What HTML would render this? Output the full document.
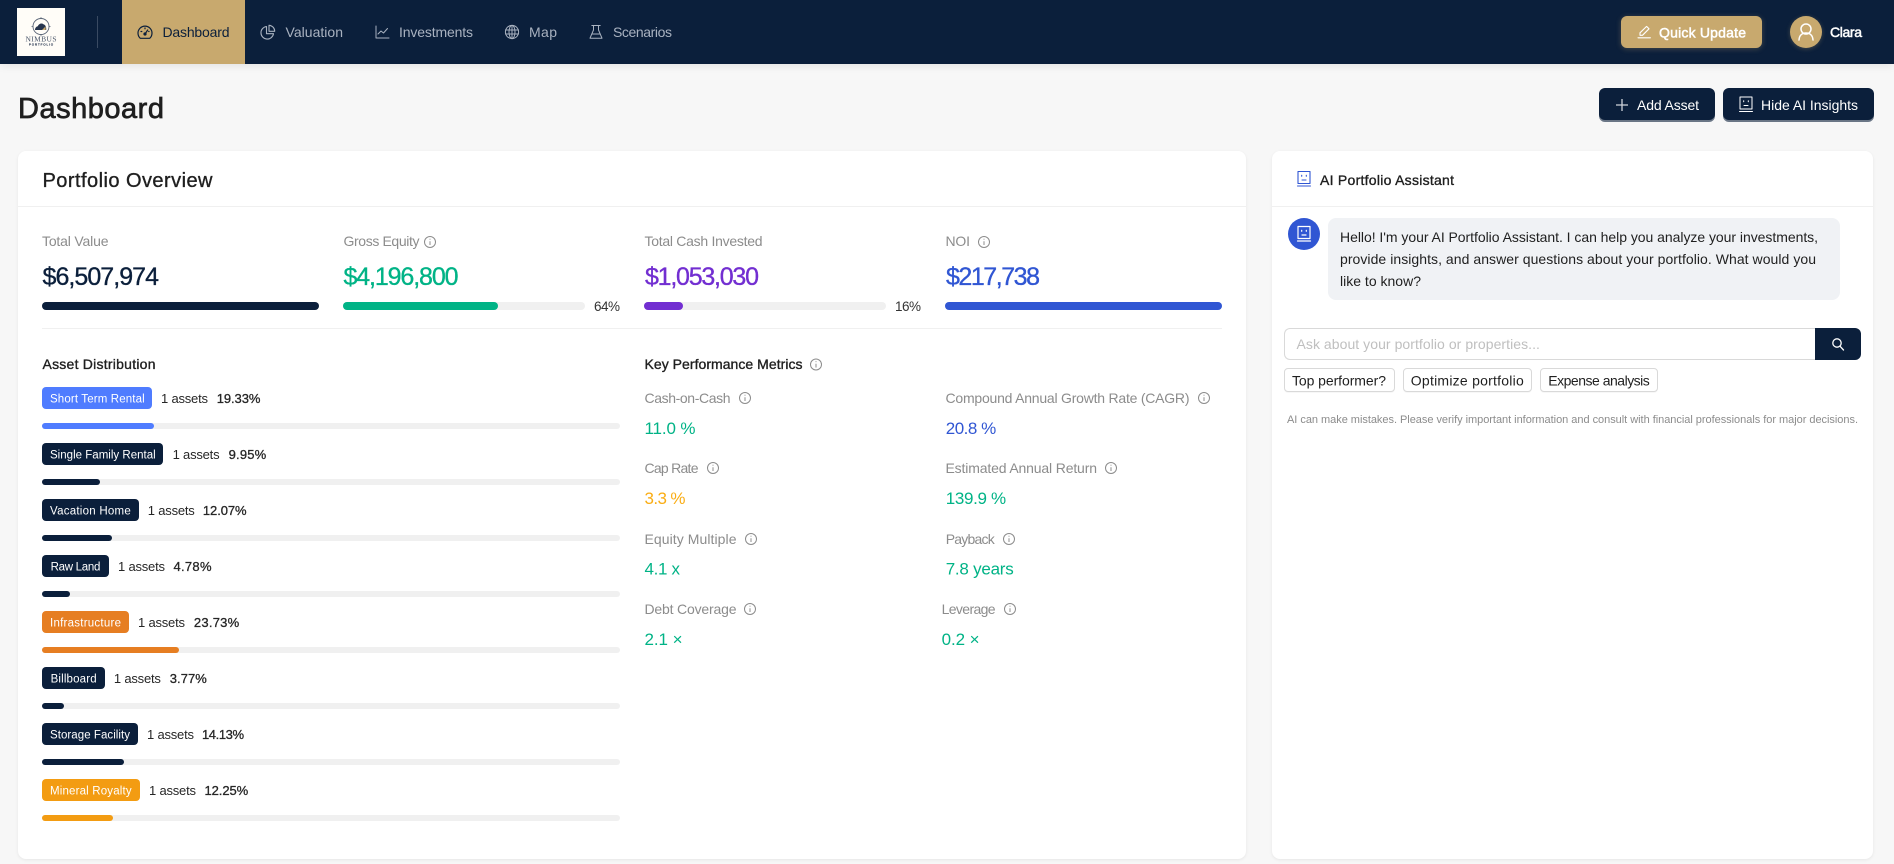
<!DOCTYPE html>
<html lang="en">
<head>
<meta charset="utf-8">
<title>Dashboard</title>
<style>
html,body{margin:0;padding:0;background:#f7f7f7;width:1894px;height:864px;overflow:hidden}
.b{position:absolute}
.card{background:#fff;border-radius:8px;box-shadow:0 1px 3px rgba(0,0,0,.07)}
.track{background:#f0f0f0;border-radius:4px}
.fill{position:absolute;left:0;top:0;bottom:0;border-radius:4px}
.badge{border-radius:4px;height:22px;left:42px}
svg.o{position:absolute;left:0;top:0}
text{font-family:"Liberation Sans",Arial,sans-serif;font-size:14px;fill:currentColor;color:#1f1f1f;white-space:pre}
.m{stroke:currentColor;stroke-width:.35px}
.g{color:#8c8c8c}
.nv{color:#a9b2c0}
.w{color:#fff}
.bd{font-size:11.5px;color:#fff}
.as{font-size:13px;color:#262626}
.pc{font-size:13px;color:#262626;stroke:currentColor;stroke-width:.3px}
.val{font-size:25px}
.kv{font-size:17px}
.gr{color:#00b386}
.bl{color:#3056d3}
.pu{color:#722ed1}
.or{color:#faad14}
.i circle,.i path{fill:none;stroke:#8c8c8c;stroke-width:1}
.ic{fill:none;stroke-linecap:round;stroke-linejoin:round}
</style>
</head>
<body>
<div class="b" style="left:0;top:0;width:1894px;height:64px;background:#0b1f3b;box-shadow:0 2px 8px rgba(0,0,0,.08)"></div>
<div class="b" style="left:17px;top:8px;width:48px;height:48px;background:#fffdf8"></div>
<div class="b" style="left:97px;top:16px;width:1px;height:32px;background:#3a4a62"></div>
<div class="b" style="left:122px;top:0;width:123px;height:64px;background:#c8a96e"></div>
<div class="b" style="left:1621px;top:16px;width:141px;height:32px;background:#c8a96e;border-radius:6px;box-shadow:0 1px 6px rgba(200,169,110,.3)"></div>
<div class="b" style="left:1790px;top:16px;width:32px;height:32px;background:#c8a96e;border-radius:50%;box-shadow:0 1px 5px rgba(200,169,110,.3)"></div>

<div class="b" style="left:1599px;top:88px;width:116px;height:32px;background:#0b1f3b;border-radius:6px;box-shadow:0 2px 0 rgba(11,31,59,.6)"></div>
<div class="b" style="left:1723px;top:88px;width:151px;height:32px;background:#0b1f3b;border-radius:6px;box-shadow:0 2px 0 rgba(11,31,59,.6)"></div>

<div class="b card" style="left:18px;top:151px;width:1228px;height:708px"></div>
<div class="b card" style="left:1272px;top:151px;width:601px;height:708px"></div>
<div class="b" style="left:18px;top:206px;width:1228px;height:1px;background:#f0f0f0"></div>
<div class="b" style="left:1272px;top:206px;width:601px;height:1px;background:#f0f0f0"></div>
<div class="b" style="left:42px;top:328px;width:1180px;height:1px;background:#f0f0f0"></div>

<div class="b track" style="left:42px;top:302px;width:277px;height:8px;background:#0b1f3b"></div>
<div class="b track" style="left:343px;top:302px;width:242px;height:8px"><div class="fill" style="width:155px;background:#00b386"></div></div>
<div class="b track" style="left:644px;top:302px;width:242px;height:8px"><div class="fill" style="width:39px;background:#722ed1"></div></div>
<div class="b track" style="left:945px;top:302px;width:277px;height:8px;background:#3056d3"></div>

<div class="b badge" style="top:387px;width:110px;background:#4f7cff"></div>
<div class="b badge" style="top:443px;width:121px;background:#0b1f3b"></div>
<div class="b badge" style="top:499px;width:97px;background:#0b1f3b"></div>
<div class="b badge" style="top:555px;width:67px;background:#0b1f3b"></div>
<div class="b badge" style="top:611px;width:87px;background:#e67e22"></div>
<div class="b badge" style="top:667px;width:63px;background:#0b1f3b"></div>
<div class="b badge" style="top:723px;width:96px;background:#0b1f3b"></div>
<div class="b badge" style="top:779px;width:98px;background:#f39c12"></div>

<div class="b track" style="left:42px;top:423px;width:578px;height:6px"><div class="fill" style="width:112px;background:#4f7cff"></div></div>
<div class="b track" style="left:42px;top:479px;width:578px;height:6px"><div class="fill" style="width:58px;background:#0b1f3b"></div></div>
<div class="b track" style="left:42px;top:535px;width:578px;height:6px"><div class="fill" style="width:70px;background:#0b1f3b"></div></div>
<div class="b track" style="left:42px;top:591px;width:578px;height:6px"><div class="fill" style="width:28px;background:#0b1f3b"></div></div>
<div class="b track" style="left:42px;top:647px;width:578px;height:6px"><div class="fill" style="width:137px;background:#e67e22"></div></div>
<div class="b track" style="left:42px;top:703px;width:578px;height:6px"><div class="fill" style="width:22px;background:#0b1f3b"></div></div>
<div class="b track" style="left:42px;top:759px;width:578px;height:6px"><div class="fill" style="width:82px;background:#0b1f3b"></div></div>
<div class="b track" style="left:42px;top:815px;width:578px;height:6px"><div class="fill" style="width:71px;background:#f39c12"></div></div>

<div class="b" style="left:1288px;top:218px;width:32px;height:32px;border-radius:50%;background:#3056d3"></div>
<div class="b" style="left:1328px;top:218px;width:512px;height:82px;border-radius:8px;background:#f0f2f5"></div>
<div class="b" style="left:1284px;top:328px;width:531px;height:32px;box-sizing:border-box;background:#fff;border:1px solid #d9d9d9;border-right:0;border-radius:6px 0 0 6px"></div>
<div class="b" style="left:1815px;top:328px;width:46px;height:32px;background:#0b1f3b;border-radius:0 6px 6px 0"></div>
<div class="b" style="left:1284px;top:368px;width:111px;height:24px;box-sizing:border-box;background:#fff;border:1px solid #d9d9d9;border-radius:4px;box-shadow:0 1px 0 rgba(0,0,0,.03)"></div>
<div class="b" style="left:1403px;top:368px;width:129px;height:24px;box-sizing:border-box;background:#fff;border:1px solid #d9d9d9;border-radius:4px;box-shadow:0 1px 0 rgba(0,0,0,.03)"></div>
<div class="b" style="left:1540px;top:368px;width:118px;height:24px;box-sizing:border-box;background:#fff;border:1px solid #d9d9d9;border-radius:4px;box-shadow:0 1px 0 rgba(0,0,0,.03)"></div>

<svg class="o" width="1894" height="864" viewBox="0 0 1894 864" xmlns="http://www.w3.org/2000/svg">
<defs>
<g id="inf" class="i"><circle cx="0" cy="0" r="5.5"/><path d="M0 -.8V3M0 -3.2V-2.4"/></g>
<g id="rb" class="ic"><path d="M1 0h12v12H1z"/><path d="M0.500 14.500h13"/><path d="M4.700 3.800v1M9.300 3.800v1M5 8.500h4"/></g>
</defs>

<!-- logo -->
<circle cx="41" cy="26.500" r="8" fill="none" stroke="#5a6577" stroke-width=".9"/>
<path d="M41 17v1.500M41 34.500v1.500M31.500 26.500h1.500M49 26.500h1.500" stroke="#5a6577" stroke-width=".7"/>
<path d="M35 30c0-2.500 1.500-3.500 2.800-3.800 1-2.400 3.800-3.400 5.600-2 1.800.500 3.200 2.500 2.800 5.800z" fill="#26354e"/>
<path d="M42 30l3.600-3.600V30z" fill="#c8a96e"/>
<text x="25.500" y="41.500" textLength="31" style="font-family:'Liberation Serif',serif;font-size:7.500px;color:#4a566a">NIMBUS</text>
<text x="29" y="45.500" textLength="24" style="font-size:2.800px;color:#4a566a" class="m">PORTFOLIO</text>

<!-- nav -->
<g class="ic" stroke="#0b1f3b" stroke-width="1.2">
<path d="M140.300 38.300a7 7 0 1 1 9.400 0z"/><path d="M145 34l2.700-4M141 31.500h.8M145 28v.8M149 31.500h-.3"/><circle cx="145" cy="34" r="1"/>
</g>
<text x="162.500" y="37" textLength="67" style="color:#0b1f3b">Dashboard</text>
<g class="ic" stroke="#a9b2c0" stroke-width="1.1">
<path d="M266.500 26.500a6.300 6.300 0 1 0 7 7.200h-7z"/><path d="M269 25.300a6 6 0 0 1 5.700 6h-5.700z"/>
</g>
<text x="285.500" y="37" textLength="57.500" class="nv">Valuation</text>
<g class="ic" stroke="#a9b2c0" stroke-width="1">
<path d="M376 26v12h13"/><path d="M378 34l3-3 2.500 2 4-4.500"/>
</g>
<text x="399" y="37" textLength="74" class="nv">Investments</text>
<g class="ic" stroke="#a9b2c0" stroke-width="1">
<circle cx="512" cy="32" r="6.600"/><ellipse cx="512" cy="32" rx="3" ry="6.600"/><path d="M512 25.400v13.200M505.600 30h12.800M505.600 34h12.800"/>
</g>
<text x="529" y="37" textLength="28" class="nv">Map</text>
<g class="ic" stroke="#a9b2c0" stroke-width="1">
<path d="M591.800 25.500h8.400M593.500 25.500v4.500l-3.500 8.200h12l-3.500-8.200v-4.500M592 34h8"/>
</g>
<text x="613" y="37" textLength="59" class="nv">Scenarios</text>

<!-- quick update, user -->
<g class="ic" stroke="#fff" stroke-width="1.100"><path d="M1638 37.800h12.400"/><path d="M1640 35.300v-2.500l6.600-6.400 2.400 2.400-6.500 6.500z"/></g>
<text x="1659" y="37.500" textLength="87" class="w m" style="stroke-width:.5px">Quick Update</text>
<g class="ic" stroke="#fff" stroke-width="1.500"><circle cx="1806" cy="29" r="5"/><path d="M1799 40c.3-4.500 3-7 7-7s6.700 2.500 7 7"/></g>
<text x="1830" y="37" textLength="32" class="w m" style="stroke-width:.5px">Clara</text>

<!-- title -->
<text x="18" y="118" textLength="146" class="m" style="font-size:29px;color:#1f1f1f;stroke-width:.7px">Dashboard</text>
<path d="M1622 99v12M1616 105h12" stroke="#cfd3da" stroke-width="1.300"/>
<text x="1637" y="110" textLength="62" class="w">Add Asset</text>
<use href="#rb" x="1739" y="97" stroke="#fff" stroke-width="1"/>
<text x="1761" y="110" textLength="97" class="w">Hide AI Insights</text>

<!-- overview -->
<text x="42.500" y="187" textLength="170" class="m" style="font-size:20px">Portfolio Overview</text>

<text x="42" y="246" textLength="66.500" class="g">Total Value</text>
<text x="343.500" y="246" textLength="76" class="g">Gross Equity</text>
<use href="#inf" x="430" y="242"/>
<text x="644.500" y="246" textLength="118" class="g">Total Cash Invested</text>
<text x="945.500" y="246" textLength="24.500" class="g">NOI</text>
<use href="#inf" x="984" y="242"/>

<text x="42.500" y="285" textLength="116.500" class="val m" style="color:#0b1f3b">$6,507,974</text>
<text x="343.500" y="285" textLength="115" class="val m gr">$4,196,800</text>
<text x="645" y="285" textLength="114" class="val m pu">$1,053,030</text>
<text x="946" y="285" textLength="94" class="val m bl">$217,738</text>

<text x="594" y="311" textLength="26" style="color:#333;font-size:13.500px">64%</text>
<text x="895" y="311" textLength="26" style="color:#333;font-size:13.500px">16%</text>

<text x="42.500" y="369" textLength="113" class="m">Asset Distribution</text>
<text x="644.500" y="369" textLength="158" class="m">Key Performance Metrics</text>
<use href="#inf" x="816" y="364.500"/>

<!-- asset rows -->
<text x="50" y="402.500" textLength="94.700" class="bd">Short Term Rental</text>
<text x="161" y="403" textLength="47" class="as">1 assets</text>
<text x="216.700" y="403" textLength="43.700" class="pc">19.33%</text>

<text x="50" y="458.500" textLength="105.700" class="bd">Single Family Rental</text>
<text x="172.600" y="459" textLength="47" class="as">1 assets</text>
<text x="228.600" y="459" textLength="37.600" class="pc">9.95%</text>

<text x="50" y="514.500" textLength="80.800" class="bd">Vacation Home</text>
<text x="147.800" y="515" textLength="47" class="as">1 assets</text>
<text x="202.900" y="515" textLength="43.700" class="pc">12.07%</text>

<text x="50.600" y="570.500" textLength="49.800" class="bd">Raw Land</text>
<text x="118" y="571" textLength="47" class="as">1 assets</text>
<text x="173.500" y="571" textLength="38" class="pc">4.78%</text>

<text x="50" y="626.500" textLength="71" class="bd">Infrastructure</text>
<text x="138" y="627" textLength="47" class="as">1 assets</text>
<text x="193.900" y="627" textLength="45.300" class="pc">23.73%</text>

<text x="50.600" y="682.500" textLength="46" class="bd">Billboard</text>
<text x="113.900" y="683" textLength="47" class="as">1 assets</text>
<text x="169.800" y="683" textLength="37" class="pc">3.77%</text>

<text x="50" y="738.500" textLength="80" class="bd">Storage Facility</text>
<text x="147" y="739" textLength="47" class="as">1 assets</text>
<text x="202" y="739" textLength="42" class="pc">14.13%</text>

<text x="50" y="794.500" textLength="81.600" class="bd">Mineral Royalty</text>
<text x="149" y="795" textLength="47" class="as">1 assets</text>
<text x="204.500" y="795" textLength="43.700" class="pc">12.25%</text>

<!-- KPI -->
<text x="644.500" y="403" textLength="86" class="g">Cash-on-Cash</text><use href="#inf" x="745" y="398"/>
<text x="945.500" y="403" textLength="244" class="g">Compound Annual Growth Rate (CAGR)</text><use href="#inf" x="1204" y="398"/>
<text x="644.500" y="434" textLength="51" class="kv gr">11.0 %</text>
<text x="945.700" y="434" textLength="50.600" class="kv bl">20.8 %</text>

<text x="644.500" y="473" textLength="54" class="g">Cap Rate</text><use href="#inf" x="713" y="468"/>
<text x="945.500" y="473" textLength="151.500" class="g">Estimated Annual Return</text><use href="#inf" x="1111" y="468"/>
<text x="644.500" y="504" textLength="41" class="kv or">3.3 %</text>
<text x="945.700" y="504" textLength="60.400" class="kv gr">139.9 %</text>

<text x="644.500" y="544" textLength="92" class="g">Equity Multiple</text><use href="#inf" x="751" y="539"/>
<text x="945.700" y="544" textLength="49" class="g">Payback</text><use href="#inf" x="1009" y="539"/>
<text x="644.500" y="574.500" textLength="35.500" class="kv gr">4.1 x</text>
<text x="945.700" y="574.500" textLength="68" class="kv gr">7.8 years</text>

<text x="644.500" y="614" textLength="92" class="g">Debt Coverage</text><use href="#inf" x="750" y="609"/>
<text x="941.600" y="614" textLength="54" class="g">Leverage</text><use href="#inf" x="1010" y="609"/>
<text x="644.500" y="645" textLength="38" class="kv gr">2.1 ×</text>
<text x="941.600" y="645" textLength="38" class="kv gr">0.2 ×</text>

<!-- AI panel -->
<use href="#rb" x="1297" y="171.500" stroke="#3056d3" stroke-width="1.100"/>
<text x="1320" y="185" textLength="134" class="m">AI Portfolio Assistant</text>
<use href="#rb" x="1297" y="226.500" stroke="#fff" stroke-width="1.200"/>

<text x="1340" y="242" textLength="478">Hello! I'm your AI Portfolio Assistant. I can help you analyze your investments,</text>
<text x="1340" y="264" textLength="476">provide insights, and answer questions about your portfolio. What would you</text>
<text x="1340" y="286" textLength="81">like to know?</text>

<text x="1296.500" y="349" textLength="243.400" style="color:#bfbfbf">Ask about your portfolio or properties...</text>
<g class="ic" stroke="#fff" stroke-width="1.300"><circle cx="1837" cy="343" r="4.200"/><path d="M1840 346.200l3.500 3.800"/></g>

<text x="1292" y="385.500" textLength="94">Top performer?</text>
<text x="1410.800" y="385.500" textLength="113">Optimize portfolio</text>
<text x="1548.300" y="385.500" textLength="101.500">Expense analysis</text>

<text x="1287" y="423" textLength="571" class="g" style="font-size:11px">AI can make mistakes. Please verify important information and consult with financial professionals for major decisions.</text>
</svg>
</body>
</html>
